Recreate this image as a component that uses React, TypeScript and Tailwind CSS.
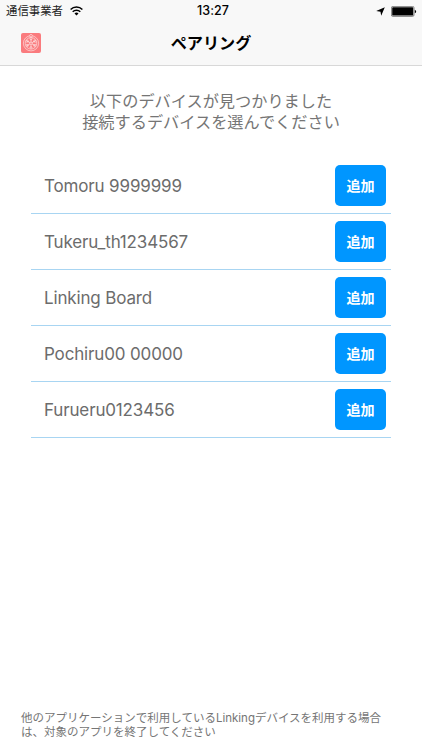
const devices = [
  'Tomoru 9999999',
  'Tukeru_th1234567',
  'Linking Board',
  'Pochiru00 00000',
  'Furueru0123456',
];

const spokes = [0, 60, 120, 180, 240, 300];

const StatusBar = () => (
  <div className="grid h-[21px] grid-cols-3 items-center pl-[6px] pr-[5px] pt-px text-[11.4px] text-[#222]">
    <div className="flex items-center gap-[7px] leading-[20px]">
      <span className="whitespace-nowrap">通信事業者</span>
      <svg className="-mt-px" width="13" height="10" viewBox="0 0 13 10" fill="none">
        <path d="M.6 3.5a8.4 8.4 0 0 1 11.8 0" stroke="#000" strokeWidth="1.5" />
        <path d="M2.7 5.7a5.4 5.4 0 0 1 7.6 0" stroke="#000" strokeWidth="1.5" />
        <path d="M6.5 9.6 4.5 7.5a2.9 2.9 0 0 1 4 0Z" fill="#000" />
      </svg>
    </div>
    <span className="pl-[3px] text-center text-[12.5px] font-medium tracking-[0.1px] text-black">13:27</span>
    <div className="flex items-center justify-end gap-[6px]">
      <svg width="9" height="9" viewBox="0 0 9 9">
        <path d="M8.8.2 5.2 8.8 4.5 4.7.2 4.1Z" fill="#000" />
      </svg>
      <svg width="26" height="11" viewBox="0 0 26 11">
        <rect x=".4" y=".4" width="22.6" height="10" rx="1.4" fill="none" stroke="#555" strokeWidth=".7" />
        <rect x="1.2" y="1.2" width="21" height="8.4" rx=".7" fill="#000" />
        <path d="M23.8 3.7a1.9 1.9 0 0 1 0 3.6Z" fill="#000" />
      </svg>
    </div>
  </div>
);

const Logo = () => (
  <svg className="ml-[21px]" width="20" height="20" viewBox="0 0 20 20" fill="none">
    <rect width="20" height="20" rx="2" fill="#fa7b7e" />
    <g stroke="#fff" strokeOpacity=".75" strokeWidth=".7">
      <circle cx="10" cy="10.3" r="7.6" />
      <circle cx="10" cy="10.3" r="5.8" />
      <circle cx="10" cy="10.3" r="1.2" />
      <circle cx="10" cy="2.7" r="1.3" fill="#fa7b7e" />
      {spokes.map((angle) => (
        <g key={angle} transform={`rotate(${angle} 10 10.3)`}>
          <path d="M10 9.1V4.5" />
          <path d="M8.6 5.6 10 7.2l1.4-1.6" />
        </g>
      ))}
    </g>
  </svg>
);

const App = () => {
  return (
    <div className="flex h-[750px] w-[422px] flex-col bg-white font-['Inter','Noto_Sans_CJK_JP',sans-serif]">
      <header className="h-[66px] border-b border-b-[#d8d8d8] bg-[#f8f8f8]">
        <StatusBar />
        <div className="grid h-[44px] grid-cols-[60px_1fr_60px] items-center">
          <Logo />
          <h1 className="text-center text-[16.1px] font-bold text-black">ペアリング</h1>
        </div>
      </header>

      <main className="flex flex-1 flex-col">
        <p className="mt-[25px] h-[42px] text-center text-[16.2px] leading-[20.5px] text-[#757575]">
          以下のデバイスが見つかりました
          <br />
          接続するデバイスを選んでください
        </p>
        <ul className="mx-[31px] mt-[25px]">
          {devices.map((device) => (
            <li key={device}>
              <div className="flex h-[55px] items-center justify-between pl-[13px] pr-[5px]">
                <span className="pt-[2px] text-[17px] tracking-[-0.15px] text-[#6c6c6c]">{device}</span>
                <button className="h-[41px] w-[51px] rounded-[5px] bg-[#0096ff] text-[14.1px] font-bold text-white">
                  追加
                </button>
              </div>
              <div className="h-px bg-[#a8d5f2]" />
            </li>
          ))}
        </ul>
      </main>

      <footer className="whitespace-nowrap px-[21px] pb-[11px] text-[11.5px] leading-[14px] text-[#757575]">
        他のアプリケーションで利用しているLinkingデバイスを利用する場合
        <br />
        は、対象のアプリを終了してください
      </footer>
    </div>
  );
};

export default App;
